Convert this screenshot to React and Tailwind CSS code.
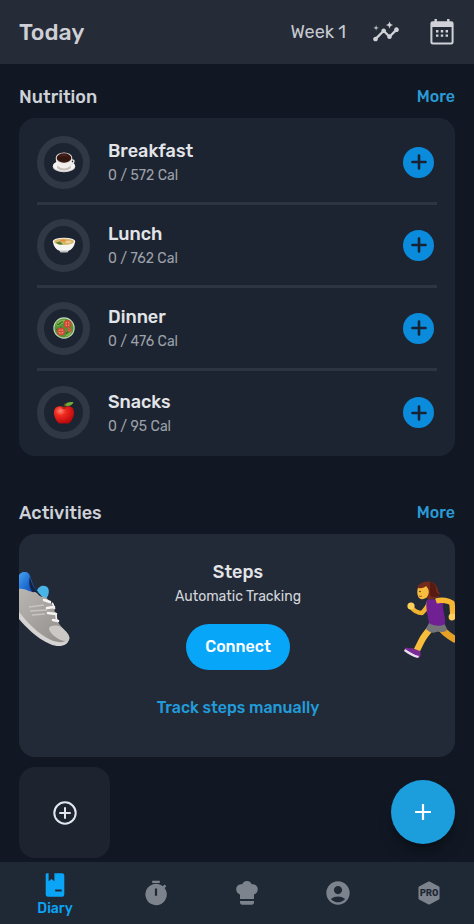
import React from "react";
import { MdInsights, MdAccountCircle } from "react-icons/md";

function CalendarIcon() {
  return (
    <svg viewBox="0 0 24 26" className="h-[26px] w-6" aria-hidden="true">
      <path fill="#d0d2d7" fillRule="evenodd" d="M4.500 0h2.400v2.200h10.200V0h2.400v2.200h1.700A2.400 2.400 0 0 1 23.600 4.600v18.600a2.400 2.400 0 0 1-2.400 2.400H2.800A2.400 2.400 0 0 1 .4 23.200V4.600A2.400 2.400 0 0 1 2.800 2.200h1.700zM2.400 8v15.100c0 .3.200.5.500.5h18.200c.3 0 .5-.2.5-.5V8z" />
      <path fill="#d0d2d7" d="M6 11h2.400v2.400H6zm4.800 0h2.400v2.400h-2.400zm4.800 0H18v2.400h-2.400zM6 15.400h2.400v2.400H6zm4.800 0h2.400v2.400h-2.400zm4.800 0H18v2.400h-2.400z" />
    </svg>
  );
}

function Coffee() {
  return (
    <svg viewBox="0 0 24 24" className="size-6" aria-hidden="true">
      <ellipse cx="12" cy="16.500" rx="11.300" ry="5.700" fill="#d6d3d1" />
      <ellipse cx="12" cy="15.800" rx="11" ry="5.200" fill="#f6f4f2" />
      <ellipse cx="12" cy="17" rx="7" ry="3.600" fill="#c4bfbb" />
      <path d="M19 10c3-.5 3.500 1 2.500 2.500-1 1.500-2.500 2-4 2" fill="none" stroke="#e7e3e0" strokeWidth="1.400" />
      <path d="M3.800 8.500C4 14.500 6.500 18.500 12 18.500s8-4 8.200-10z" fill="#f1eeec" />
      <ellipse cx="12" cy="8" rx="8.300" ry="5.500" fill="#e5dfda" />
      <ellipse cx="12" cy="8" rx="7.300" ry="4.700" fill="#32160f" />
      <path d="M7 7c2-2.500 7-3 9-.5-3-1-6-.8-9 .5" fill="#59301f" />
    </svg>
  );
}

function Soup() {
  return (
    <svg viewBox="0 0 24 24" className="size-6" aria-hidden="true">
      <path d="M1 8.500c.5 5.500 3.500 8.300 6.500 9.300l1 1.400h7l1-1.400c3-1 6-3.800 6.500-9.300z" fill="#f4f4f3" />
      <path d="M7.500 17.500h9l-1 1.700h-7z" fill="#bfc1c3" />
      <ellipse cx="12" cy="8.600" rx="11.300" ry="3.900" fill="#fff" />
      <ellipse cx="12" cy="8.700" rx="10.100" ry="3.200" fill="#d8b66b" />
      <path d="M4 9.500c2 2.400 5 2.600 7 1.800L8 8.400z" fill="#4f8131" />
      <ellipse cx="11" cy="7.600" rx="3" ry="1" fill="#e98b3e" />
      <ellipse cx="16.500" cy="9" rx="3" ry="1.100" fill="#edd79a" />
    </svg>
  );
}

function Salad() {
  return (
    <svg viewBox="0 0 24 24" className="size-6" aria-hidden="true">
      <circle cx="12" cy="12" r="10.700" fill="#c5d6bc" />
      <circle cx="12" cy="12" r="9.600" fill="#549236" />
      <path d="M3.500 9c2-4 6-6 10-5.300L11 7.500 6 10zM14 19l6-4-2 4-5 2z" fill="#83b64c" />
      <path d="M5 8c3 2 3-3 6-2m-7 8c3-2 4 0 5-3m5 7c0-3 4-1 5-4" fill="none" stroke="#2f6e2c" strokeWidth="1.300" />
      <circle cx="15.500" cy="8" r="3.900" fill="#cf4934" />
      <circle cx="15.500" cy="8" r="2.300" fill="#e9886a" />
      <circle cx="9" cy="15.500" r="4.100" fill="#cf4934" />
      <circle cx="9" cy="15.500" r="2.500" fill="#e9886a" />
      <path d="M15.500 5.500v5M13 8h5M9 13v5M6.500 15.500h5" stroke="#c23a29" strokeWidth=".8" />
      <circle cx="17.500" cy="14" r="2.200" fill="#ca5c40" />
    </svg>
  );
}

function Apple() {
  return (
    <svg viewBox="0 0 24 24" className="size-6" aria-hidden="true">
      <defs>
        <radialGradient id="apple" cx=".32" cy=".28" r=".75">
          <stop offset="0" stopColor="#ff8a72" />
          <stop offset=".35" stopColor="#f12a20" />
          <stop offset="1" stopColor="#b9070b" />
        </radialGradient>
      </defs>
      <path d="M12 6.500c3-2 7.500-2 9.300 1.500 2 4-.3 11-3.800 13.700-2 1.500-3.500.6-5.500.6s-3.500.9-5.500-.6C3 19 .7 12 2.700 8 4.500 4.500 9 4.500 12 6.500z" fill="url(#apple)" />
      <path d="M8.500 6.500c2 1.500 5 1.500 7 0-2 .3-5 .3-7 0" fill="#8d1010" />
      <path d="M12 7c0-2 .3-3.300 1.300-4.500" stroke="#6b3a1c" strokeWidth="1.300" fill="none" />
      <path d="M12.800 4.500c1-3.300 5-4 8.700-3.300-1 3-5 4.600-8.700 3.300z" fill="#6fae35" />
    </svg>
  );
}

function Shoe() {
  return (
    <svg viewBox="0 0 54 80" className="h-20 w-[54px]" aria-hidden="true">
      <defs>
        <linearGradient id="shoeBody" x1="0" y1="0" x2="1" y2="1">
          <stop offset="0" stopColor="#b9b6b2" />
          <stop offset="1" stopColor="#8f8b88" />
        </linearGradient>
        <linearGradient id="shoeHeel" x1="0" y1="0" x2="1" y2="1">
          <stop offset="0" stopColor="#4aa3ee" />
          <stop offset=".5" stopColor="#1766d0" />
          <stop offset="1" stopColor="#0b338b" />
        </linearGradient>
      </defs>
      <path d="M18 19c1-5 8-7 11-3 2 4 0 9-3 12z" fill="#4bb4e6" />
      <path d="M0 3C3-1 8-1 10 2c3 5 3 12 9 18L12 27 0 20z" fill="url(#shoeHeel)" />
      <path d="M11 4c1 6 3 12 8 16l-3 3C11 18 9 12 11 4z" fill="#15233f" />
      <path d="M0 17c7-1 11 4 16 3 3 1 4 5 8 5 2-1 5 2 8 6 5 8 5 17 9 22 5 6 11 10 9 15-3 6-12 6-19 2C17 63 7 51 0 44z" fill="url(#shoeBody)" />
      <path d="M0 40c8 10 19 22 32 28 7 3 14 3 18-1-1 7-10 9-19 5C17 66 7 55 0 47z" fill="#d6d4d2" />
      <path d="M30 56c2-3 8-3 12-1 5 4 10 9 8 13-3 2-8 1-12-2-5-3-8-7-8-10z" fill="#cbc8c5" />
      <path d="M10 35l15-2m-14 6l17-1m-15 5l13-1" stroke="#c8c5c1" strokeWidth="1.500" />
      <path d="M25 28l6 2m-3 6l7-1m-6 6l8 1m-3 6l5 1" stroke="#f5f4f3" strokeWidth="2.600" strokeLinecap="round" />
      <path d="M33 31c3 3 0 4 3 6m0 4c3 3-1 4 3 9" fill="none" stroke="#eeedeb" strokeWidth="1.800" />
    </svg>
  );
}

function Runner() {
  return (
    <svg viewBox="0 0 52 80" className="h-20 w-[52px]" aria-hidden="true">
      <path d="M14 9C15 2 26-1 32 4c4 4 2 8 5 9-1 5-7 7-12 6z" fill="#742b1b" />
      <path d="M27 2c5 1 7 5 6 9 1 3 3 3 4 3-3 4-8 4-10 1z" fill="#571b13" />
      <path d="M15 8c4 1 7-1 8-2 3 3 4 7 1 11-3 3-8 3-9-1-1-2-1-5 0-8z" fill="#f8bd3e" />
      <circle cx="17" cy="11.500" r=".8" fill="#432718" />
      <path d="M16 16c1 .6 2 .5 3 0" fill="none" stroke="#a84a25" strokeWidth="1" />
      <path d="M26 22c-1 5-4 8-7 11-4 0-8-2-11-6" fill="none" stroke="#f3b22e" strokeWidth="4.500" strokeLinecap="round" strokeLinejoin="round" />
      <circle cx="8" cy="26" r="3.600" fill="#ffd05c" />
      <path d="M36 45c3 6 8 10 17 15" fill="none" stroke="#e5a125" strokeWidth="7" />
      <path d="M29 46c-3 5-8 9-11 16l-4 8" fill="none" stroke="#f9bd3c" strokeWidth="6.500" strokeLinecap="round" />
      <path d="M26 43h15c2 4 4 6 2 8-4 2-7 0-10 1-3 2-7 0-10-3z" fill="#747579" />
      <path d="M24 20c4-1 8-1 11 0l5 3c-1 7 3 14 2 21-4 3-12 2-16-1-1-8-4-16-2-23z" fill="#702093" />
      <path d="M33 21c6-2 13 0 16 2l1 14" fill="none" stroke="#f7b733" strokeWidth="5.500" strokeLinejoin="round" />
      <circle cx="49" cy="37" r="3.400" fill="#ffd05c" />
      <path d="M2 68c2-1 4 1 7 0l8 3c1 3 1 5-1 7C10 77 5 73 2 71z" fill="#7a2c94" />
      <path d="M2 69c5 3 9 6 14 7l-1 2C10 77 5 74 1 71z" fill="#eadff0" />
    </svg>
  );
}

function DiaryIcon() {
  return (
    <svg viewBox="0 0 20 24" className="h-6 w-5" aria-hidden="true">
      <path fill="#0aa5f7" fillRule="evenodd" d="M2 .3h1.600v8L6.500 6l2.900 2.300v-8H17A2.300 2.300 0 0 1 19.300 2.600v18.800A2.300 2.300 0 0 1 17 23.700H3A2.300 2.300 0 0 1 .7 21.400V1.600C.7.900 1.300.3 2 .3zM10.200 16.500v2h6.500v-2z" />
    </svg>
  );
}

function TimerIcon() {
  return (
    <svg viewBox="0 0 24 26" className="h-[26px] w-6" aria-hidden="true">
      <path fill="#7c838d" fillRule="evenodd" d="M8.200.7h7.600v2.400H8.200zM12 3.800c2.700 0 5 .9 6.900 2.400l1.700-1.700 1.700 1.700-1.700 1.800A10.700 10.700 0 1 1 12 3.800zM10.900 8.600v7.200h2.200V8.600z" />
    </svg>
  );
}

function ChefIcon() {
  return (
    <svg viewBox="0 0 24 26" className="h-[26px] w-6" aria-hidden="true">
      <path fill="#7c838d" d="M7.200 4.300C8 2.200 9.800 1 12 1s4 1.200 4.800 3.300c3.300-.6 6 1.800 6 5 0 2.800-1.900 4.600-3.800 5.100v4.700H5v-4.700c-1.900-.5-3.800-2.300-3.800-5.100 0-3.200 2.700-5.600 6-5zM5 21h14v1.500c0 1.200-.8 2.300-2.200 2.300H7.200C5.800 24.800 5 23.700 5 22.500z" />
    </svg>
  );
}

function ProIcon() {
  return (
    <svg viewBox="0 0 24 26" className="h-[26px] w-6" aria-hidden="true">
      <path fill="#7c838d" stroke="#7c838d" strokeWidth="2" strokeLinejoin="round" d="M12 2.500l9.500 5v11L12 23.500l-9.500-5v-11z" />
      <text x="12" y="16" textAnchor="middle" fontSize="9" fontWeight="700" fill="#1f2935">PRO</text>
    </svg>
  );
}

const meals = [
  { name: "Breakfast", goal: 572, Icon: Coffee },
  { name: "Lunch", goal: 762, Icon: Soup },
  { name: "Dinner", goal: 476, Icon: Salad },
  { name: "Snacks", goal: 95, Icon: Apple },
];

function SectionHeader({ title }) {
  return (
    <div className="flex h-[42px] items-center justify-between">
      <h2 className="text-lg font-medium text-[#ced1d7]">{title}</h2>
      <a href="#" className="text-base font-medium text-[#2a9bd5]">More</a>
    </div>
  );
}

function MealRow({ name, goal, Icon }) {
  return (
    <li className="flex h-[83px] items-center border-b-[3px] border-[#2d3442] last:border-b-0">
      <div className="flex size-[53px] shrink-0 items-center justify-center rounded-full border-[7px] border-[#303745]">
        <Icon />
      </div>
      <div className="ml-[18px] flex-1">
        <h3 className="text-lg leading-7 font-medium text-[#e2e4e8]">{name}</h3>
        <p className="text-sm leading-[22px] text-[#9ca1aa]">0 / {goal} Cal</p>
      </div>
      <button type="button" aria-label={`Add ${name}`} className="mr-[3px] flex size-[31px] items-center justify-center rounded-full bg-[#0a8bdc]">
        <svg viewBox="0 0 16 16" className="size-4" aria-hidden="true">
          <path d="M8 1.500v13M1.500 8h13" stroke="#172335" strokeWidth="2.600" strokeLinecap="round" />
        </svg>
      </button>
    </li>
  );
}

export default function App() {
  return (
    <div className="flex min-h-screen flex-col bg-[#111824] font-['Rubik','Inter',sans-serif]">
      <header className="flex h-16 items-center bg-[#252b37] pr-5 pl-[19px]">
        <h1 className="flex-1 text-[23px] font-medium text-[#ced0d5]">Today</h1>
        <button type="button" className="text-lg text-[#c6c9cf]">Week 1</button>
        <button type="button" aria-label="Insights" className="ml-[26px] text-[#d0d2d7]">
          <MdInsights className="size-7" />
        </button>
        <button type="button" aria-label="Calendar" className="ml-[30px]">
          <CalendarIcon />
        </button>
      </header>

      <main className="px-[19px] pt-3 pb-1">
        <section>
          <SectionHeader title="Nutrition" />
          <ul className="rounded-2xl bg-[#1d2431] px-[18px] pt-1 pb-[2px]">
            {meals.map((meal) => (
              <MealRow key={meal.name} {...meal} />
            ))}
          </ul>
        </section>

        <section className="mt-9">
          <SectionHeader title="Activities" />
          <div className="flex h-[223px] justify-between overflow-hidden rounded-2xl bg-[#232a37]">
            <div className="pt-[38px]"><Shoe /></div>
            <div className="flex flex-col items-center pt-6">
              <h3 className="text-lg leading-7 font-medium text-[#e2e4e8]">Steps</h3>
              <p className="text-sm leading-[22px] text-[#d3d6dc]">Automatic Tracking</p>
              <button type="button" className="mt-4 h-[46px] w-26 rounded-full bg-[#08a6f8] text-base font-medium text-white">Connect</button>
              <a href="#" className="mt-6 text-base leading-7 font-medium text-[#219cdb]">Track steps manually</a>
            </div>
            <div className="pt-[46px]"><Runner /></div>
          </div>
          <button type="button" aria-label="Add activity" className="mt-[10px] flex size-[91px] items-center justify-center rounded-2xl bg-[#1d2430]">
            <svg viewBox="0 0 24 24" className="size-6" fill="none" stroke="#e4e6ee" strokeWidth="2" strokeLinecap="round" aria-hidden="true">
              <circle cx="12" cy="12" r="10.700" />
              <path d="M12 7v10M7 12h10" />
            </svg>
          </button>
        </section>
      </main>

      <button type="button" aria-label="Add entry" className="fixed right-[19px] bottom-20 flex size-16 items-center justify-center rounded-full bg-[#1c9ddc] shadow-lg shadow-black/40">
        <svg viewBox="0 0 18 18" className="size-[18px]" aria-hidden="true">
          <path d="M9 1v16M1 9h16" stroke="white" strokeWidth="2.200" />
        </svg>
      </button>

      <nav className="sticky bottom-0 mt-auto grid h-[62px] grid-cols-[110px_repeat(4,1fr)] bg-[#1f2935]">
        <a href="#" aria-current="page" className="flex flex-col items-center pt-[11px] text-sm leading-6 font-medium text-[#0aa5f7]">
          <DiaryIcon />
          Diary
        </a>
        <a href="#" aria-label="Fasting" className="flex items-center justify-center"><TimerIcon /></a>
        <a href="#" aria-label="Recipes" className="flex items-center justify-center"><ChefIcon /></a>
        <a href="#" aria-label="Profile" className="flex items-center justify-center text-[#7c838d]"><MdAccountCircle className="size-7" /></a>
        <a href="#" aria-label="Pro" className="flex items-center justify-center"><ProIcon /></a>
      </nav>
    </div>
  );
}
